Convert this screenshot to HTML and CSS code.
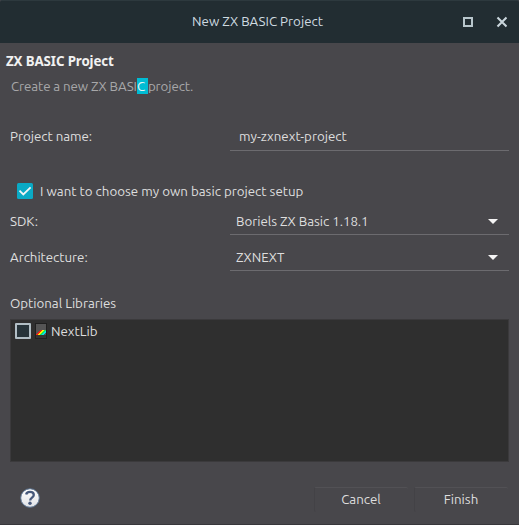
FILE: index.html
```
<!DOCTYPE html>
<html lang="en">
<head>
<meta charset="utf-8">
<title>New ZX BASIC Project</title>
<link rel="stylesheet" href="styles.css">
</head>
<body>
<div class="window">
  <header class="titlebar">
    <span class="title">New ZX BASIC Project</span>
    <svg class="controls" width="46" height="12" viewBox="0 0 46 12">
      <rect x="3" y="2" width="8" height="8" fill="none" stroke="#b8c6cc" stroke-width="2"/>
      <path d="M36.5 1.5l9 9M45.5 1.5l-9 9" fill="none" stroke="#cad6dc" stroke-width="2.1"/>
    </svg>
  </header>
  <section class="banner">
    <h1>ZX BASIC Project</h1>
    <p>Create a new ZX BASI<span class="selected">C </span>project.</p>
  </section>
  <main class="form">
    <div class="row name-row">
      <label>Project name:</label>
      <div class="field input">my-zxnext-project</div>
    </div>
    <div class="check-row">
      <svg width="16" height="16" viewBox="0 0 16 16"><rect width="16" height="16" rx="1.5" fill="#0aaac5"/><path d="M2.5 7.7l3.8 3.8 7.3-7.1" fill="none" stroke="#f1f5f5" stroke-width="1.8"/></svg>
      <span>I want to choose my own basic project setup</span>
    </div>
    <div class="row">
      <label>SDK:</label>
      <div class="field"><span>Boriels ZX Basic 1.18.1</span>
        <svg class="arrow" width="10" height="5" viewBox="0 0 10 5"><path d="M0 0h10L5 5z" fill="#f5f5f5"/></svg></div>
    </div>
    <div class="row">
      <label>Architecture:</label>
      <div class="field"><span>ZXNEXT</span>
        <svg class="arrow" width="10" height="5" viewBox="0 0 10 5"><path d="M0 0h10L5 5z" fill="#f5f5f5"/></svg></div>
    </div>
    <h2>Optional Libraries</h2>
    <div class="list">
      <div class="item">
        <span class="box"></span>
        <svg width="12" height="16" viewBox="0 0 12 16" shape-rendering="crispEdges">
          <rect width="12" height="16" rx="1" fill="#202020"/>
          <rect x="1" y="1" width="10" height="14" fill="#343434"/>
          <rect x="1" y="1" width="10" height="11" fill="#555"/>
          <path d="M1 12v-1h1v-1h1V9h1V8h1V7h2v1H6v1H5v1H4v1H3v1z" fill="#f02018"/>
          <path d="M3 12v-1h1v-1h1V9h1V8h1V7h2v1H8v1H7v1H6v1H5v1z" fill="#ffed00"/>
          <path d="M5 12v-1h1v-1h1V9h1V8h1V7h2v1h-1v1H9v1H8v1H7v1z" fill="#19e65b"/>
          <path d="M7 12v-1h1v-1h1V9h1V8h1v2h-1v1H9v1z" fill="#00dff0"/>
        </svg>
        <span class="item-name">NextLib</span>
      </div>
    </div>
  </main>
  <footer class="footer">
    <svg class="help" width="20" height="20" viewBox="0 0 20 20">
      <defs><linearGradient id="help" x2="0" y2="1"><stop stop-color="#fff"/><stop offset="1" stop-color="#dfe1e5"/></linearGradient></defs>
      <circle cx="10" cy="10" r="9.3" fill="url(#help)" stroke="#58718f" stroke-width="1"/>
      <path d="M6.2 6.5C6.4 4.7 8 3.9 10 3.9c2.2 0 3.8 1.1 3.8 3 0 2.7-3.6 2.7-3.6 5.5" fill="none" stroke="#46597c" stroke-width="2.3"/>
      <circle cx="10" cy="15.2" r="1.7" fill="#46597c"/>
    </svg>
    <div class="buttons">
      <div class="button">Cancel</div>
      <div class="button">Finish</div>
    </div>
  </footer>
</div>
</body>
</html>
```
FILE: styles.css
```
* { box-sizing: border-box; }
body { margin: 0; background: #48474b; font: 13.333px/18px Ubuntu, "Noto Sans", sans-serif; color: #dedede; white-space: nowrap; overflow: hidden; }
svg { display: block; flex: none; }
h1, h2, p { margin: 0; font: inherit; }
.window { width: 519px; height: 525px; display: flex; flex-direction: column; border-bottom: 1px solid #38373b; }
.titlebar { height: 43px; display: grid; grid-template-columns: 1fr 135px 1fr; align-items: center; background: #222d32; border-top: 1px solid #2d393e; border-radius: 2px 2px 0 0; color: #cfdbe1; }
.title { grid-column: 2; text-align: center; margin-left: -4px; }
.controls { justify-self: end; margin-right: 12px; }
.banner { height: 74px; padding: 9px 6px 0; }
.banner h1 { font-family: "Noto Sans", sans-serif; font-weight: 700; color: #f1f1f1; height: 18px; letter-spacing: -0.12px; }
.banner p { margin: 8px 0 0 5px; color: #a7a7a9; letter-spacing: -0.1px; }
.selected { display: inline-block; height: 16px; line-height: 18px; background: #00bcd4; color: #e8f5f6; white-space: pre; }
.form { padding: 0 10px; letter-spacing: -0.03px; }
.row { height: 36px; display: grid; grid-template-columns: 220px 279px; align-items: center; }
.row label { padding-top: 3px; }
.name-row { height: 39px; }
.name-row label { padding: 0; }
.field { height: 29px; align-self: center; padding: 4px 11px 0 6px; border-bottom: 1px solid #6c6b6f; display: flex; align-items: center; justify-content: space-between; }
.name-row .field { padding: 2px 9px 0; margin-bottom: 1px; letter-spacing: 0; }
.arrow { margin-top: 0; }
.check-row { margin: 25px 0 0 7px; height: 21px; display: flex; align-items: center; gap: 7px; letter-spacing: 0; }
.check-row svg { margin-bottom: 2px; }
.form h2 { margin-top: 21px; height: 18px; }
.list { height: 143px; margin-top: 6px; border: 1px solid #3b3a3c; background: #2f2f2f; padding: 2px 3px; }
.item { height: 18px; display: flex; align-items: center; }
.item svg { margin: 0 4px; }
.item-name { padding-top: 2px; }
.box { width: 16px; height: 16px; margin-left: 1px; border: 2px solid #b1bec5; border-radius: 1px; background: #27343a; }
.footer { display: flex; justify-content: space-between; margin: 25px 10px 0; padding-left: 10px; align-items: center; }
.help { margin-top: -3px; }
.buttons { display: flex; gap: 6px; margin-right: 1px; }
.button { width: 94px; height: 25px; padding: 0 1px 1px 0; border-top: 1px solid #525155; border-left: 1px solid #434246; border-radius: 2px; display: flex; align-items: center; justify-content: center; }
```
